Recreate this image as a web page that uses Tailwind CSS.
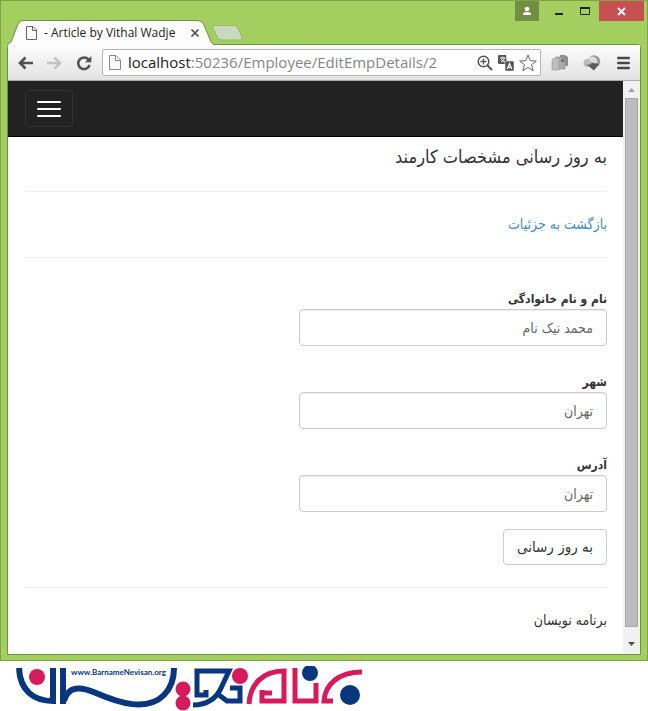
<!DOCTYPE html>
<html lang="fa">
<head>
    <meta charset="UTF-8">
    <meta name="viewport" content="width=device-width, initial-scale=1.0">
    <title>- Article by Vithal Wadje</title>
    <script src="https://cdn.jsdelivr.net/npm/@tailwindcss/browser@4"></script>
</head>
<body class="bg-white font-['Open_Sans','DejaVu_Sans',sans-serif] text-[#333]">
    <!-- Browser window -->
    <div class="border border-[#7fa345] bg-[#a2cf5f] px-[6px] pb-[5px]">
        <!-- Title bar -->
        <div class="flex h-[19px] items-start justify-end">
            <button aria-label="Profile" class="flex h-5 w-6 items-center justify-center bg-[#708f43]">
                <svg class="size-[10px]" viewBox="0 0 10 10" fill="#fff"><circle cx="5" cy="3" r="2.3"/><path d="M1 9V8Q1 6 5 6T9 8V9Z"/></svg>
            </button>
            <button aria-label="Minimize" class="ml-2 flex h-5 w-6 items-center justify-center">
                <svg class="h-3 w-3" viewBox="0 0 12 12"><path d="M2 8h8v2H2z" fill="#1c2610"/></svg>
            </button>
            <button aria-label="Maximize" class="flex h-5 w-7 items-center justify-center">
                <svg class="h-3 w-3" viewBox="0 0 12 12"><path d="M1.500 3h9v6.500h-9z" fill="none" stroke="#1c2610"/><path d="M1 2h10v2H1z" fill="#1c2610"/></svg>
            </button>
            <button aria-label="Close" class="mr-[-3px] flex h-5 w-[45px] items-center justify-center bg-[#c75050]">
                <svg class="size-[9px]" viewBox="0 0 9 9"><path d="M1 1l7 7M8 1l-7 7" stroke="#fff" stroke-width="1.800"/></svg>
            </button>
        </div>

        <!-- Tabs -->
        <div class="flex h-6">
            <div class="relative z-10 -mb-px flex h-[25px] w-[206px] items-center pl-[19px] pr-[14px]">
                <svg class="absolute inset-0 h-full w-full" viewBox="0 0 206 25" preserveAspectRatio="none"><path d="M0 25C4 23 5 21 6 17L11 4Q12.500 .500 16 .500H191Q195 .500 196.500 4L202 17Q204 23 206 24V25Z" fill="#fdfdfd"/><path d="M0 24.500C4 23 5 21 6 17L11 4Q12.500 .500 16 .500H191Q195 .500 196.500 4L202 17Q204 23 206 24" fill="none" stroke="#6f9140"/></svg>
                <svg class="relative h-[14px] w-[11px]" viewBox="0 0 11 14"><path d="M.5.500H7L10.500 4V13.500H.5ZM6.500.500V4.500H10.500" fill="#fff" stroke="#666"/></svg>
                <span class="relative ml-[7px] whitespace-nowrap text-xs text-[#222]">- Article by Vithal Wadje</span>
                <button aria-label="Close tab" class="relative ml-auto">
                    <svg class="size-2" viewBox="0 0 8 8"><path d="M.5.500l7 7M7.500.500l-7 7" stroke="#555" stroke-width="1.600"/></svg>
                </button>
            </div>
            <button aria-label="New tab" class="-ml-px mt-[5px] h-4">
                <svg class="h-4 w-8" viewBox="0 0 32 16"><path d="M2 .500H22Q25 .500 26 3L30 12Q31 15 28 15H9Q6 15 5 12L1 3Q0 .500 2 .500Z" fill="#c8d9bd" stroke="#98b967"/></svg>
            </button>
        </div>

        <!-- Toolbar -->
        <div class="rounded-t-sm border border-[#6f9140]">
            <div class="flex h-9 items-center border-b border-[#aaa] bg-linear-to-b from-[#fdfdfd] to-[#e2e2e2] px-[10px]">
                <button aria-label="Back"><svg class="h-[14px] w-4" viewBox="0 0 16 14"><path d="M15 7H2.500M7.500 1.500L2 7l5.500 5.500" fill="none" stroke="#505050" stroke-width="2.600"/></svg></button>
                <button aria-label="Forward" class="ml-3"><svg class="h-[14px] w-4" viewBox="0 0 16 14"><path d="M1 7H13.500M8.500 1.500L14 7l-5.500 5.500" fill="none" stroke="#c4c4c4" stroke-width="2.600"/></svg></button>
                <button aria-label="Reload" class="ml-[14px]"><svg class="size-4" viewBox="0 0 16 16"><path d="M12.500 4.500A5.800 5.800 0 1 0 13.600 10" fill="none" stroke="#505050" stroke-width="2.500"/><path d="M15.300 1V7.300H9Z" fill="#505050"/></svg></button>
                <div class="ml-[10px] flex h-[27px] min-w-0 grow items-center rounded-xs border border-[#b5b5b5] bg-white pl-[6px] pr-[3px]">
                    <svg class="h-[15px] w-3 shrink-0" viewBox="0 0 12 15"><path d="M.5.500H7L11.500 5V14.500H.5ZM6.500.500V5.500H11.500" fill="#fafafa" stroke="#888"/></svg>
                    <a href="#" dir="ltr" class="ml-[7px] whitespace-nowrap text-[15px] text-[#858585]"><span class="text-[#222]">localhost</span>:50236/Employee/EditEmpDetails/2</a>
                    <button aria-label="Zoom" class="ml-auto"><svg class="size-4" viewBox="0 0 16 16" fill="none" stroke="#555"><circle cx="6.500" cy="6.500" r="5.300" stroke-width="1.500"/><path d="M3.500 6.500h6M6.500 3.500v6" stroke-width="1.300"/><path d="M10.500 10.500l4.500 4.500" stroke-width="2"/></svg></button>
                    <button aria-label="Translate" class="ml-[5px]"><svg class="size-4" viewBox="0 0 16 16"><path d="M1 0H8L9 9H1Q0 9 0 8V1Q0 0 1 0Z" fill="#555"/><path d="M7 6H15Q16 6 16 7V15Q16 16 15 16H8Q7 16 7 15Z" fill="#555" stroke="#fff" stroke-width=".5"/><path d="M2 3h5.500M4.700 1.500V3M3 7Q6 5.500 6.500 3M3 4Q4 6 7 7" stroke="#fff" fill="none"/><path d="M9.300 14l2.200-5.500L13.700 14M10 12.300h3" stroke="#fff" stroke-width="1.200" fill="none"/></svg></button>
                    <button aria-label="Bookmark" class="ml-[5px]"><svg class="h-[18px] w-[18px]" viewBox="0 0 18 18"><path d="M9 1l2.200 5.700 6.100.300-4.800 3.800 1.700 6L9 13.400l-5.200 3.400 1.700-6L.7 7l6.100-.3Z" fill="#fff" stroke="#666"/></svg></button>
                </div>
                <button aria-label="Copy pages" class="ml-[10px]"><svg class="h-[17px] w-[18px]" viewBox="0 0 18 17"><path d="M9 1h5l3 2v9H9Z" fill="#909090"/><path d="M5 3h6l3 2v10H5Z" fill="#aaa" stroke="#888" stroke-width=".6"/><path d="M1 6l2-2h5v12H1Z" fill="#bebebe" stroke="#999" stroke-width=".6"/><path d="M10 5h3v3h-3Z" fill="#777"/></svg></button>
                <button aria-label="Download manager" class="ml-[14px]"><svg class="h-4 w-[18px]" viewBox="0 0 18 16"><circle cx="11" cy="6.500" r="6.200" fill="#999"/><circle cx="4.500" cy="8" r="4" fill="#bbb"/><path d="M6 2Q12 0 14 5T8 7Q5 5 6 2Z" fill="#ddd"/><path d="M3 9Q7 11 9 8l7 1-5 6.500Z" fill="#5c5c5c"/></svg></button>
                <button aria-label="Menu" class="ml-[16px]"><svg class="h-[14px] w-[13px]" viewBox="0 0 13 14"><path d="M1.200 2h10.600M1.200 7h10.600M1.200 12h10.600" stroke="#484848" stroke-width="2.400" stroke-linecap="round"/></svg></button>
            </div>

            <!-- Viewport -->
            <div class="flex bg-white">
                <div class="min-w-0 grow">
                    <nav class="flex h-14 items-center border-b border-black bg-[#222] pl-[17px]">
                        <button aria-label="Toggle navigation" class="flex h-[37px] w-12 flex-col items-center justify-center gap-[5px] rounded-sm border border-[#333]">
                            <span class="h-[2px] w-6 rounded-xs bg-white"></span>
                            <span class="h-[2px] w-6 rounded-xs bg-white"></span>
                            <span class="h-[2px] w-6 rounded-xs bg-white"></span>
                        </button>
                    </nav>

                    <main dir="rtl" class="pb-6 pl-[17px] pr-4 pt-[10px] font-['DejaVu_Sans_Condensed','DejaVu_Sans',sans-serif] text-sm leading-5">
                        <h4 class="text-lg leading-5">به روز رسانی مشخصات کارمند</h4>
                        <hr class="mb-[22px] mt-6 border-[#eee]">
                        <a href="#" class="block text-[#428bca]">بازگشت به جزئیات</a>
                        <hr class="mb-[31px] mt-[23px] border-[#eee]">
                        <form>
                            <div class="mb-[26px]">
                                <label for="name" class="block text-xs leading-5 font-bold">نام و نام خانوادگی</label>
                                <input id="name" type="text" value="محمد نیک نام" class="block h-[37px] w-[308px] max-w-full rounded-sm border border-[#ccc] px-[13px] text-[#666] shadow-[inset_0_1px_1px_rgba(0,0,0,0.075)]">
                            </div>
                            <div class="mb-[26px]">
                                <label for="city" class="block text-xs leading-5 font-bold">شهر</label>
                                <input id="city" type="text" value="تهران" class="block h-[37px] w-[308px] max-w-full rounded-sm border border-[#ccc] px-[13px] text-[#666] shadow-[inset_0_1px_1px_rgba(0,0,0,0.075)]">
                            </div>
                            <div class="mb-[17px]">
                                <label for="address" class="block text-xs leading-5 font-bold">آدرس</label>
                                <input id="address" type="text" value="تهران" class="block h-[37px] w-[308px] max-w-full rounded-sm border border-[#ccc] px-[13px] text-[#666] shadow-[inset_0_1px_1px_rgba(0,0,0,0.075)]">
                            </div>
                            <button type="button" class="block h-9 rounded-sm border border-[#ccc] bg-white px-[13px] text-[15px]">به روز رسانی</button>
                        </form>
                        <hr class="my-[22px] border-[#eee]">
                        <footer>برنامه نویسان</footer>
                    </main>
                </div>

                <!-- Scrollbar -->
                <div class="flex w-[17px] shrink-0 flex-col items-center bg-[#f1f1f1]">
                    <svg class="h-[17px] w-[17px]" viewBox="0 0 17 17"><path d="M5 11h7L8.500 7Z" fill="#a3a3a3"/></svg>
                    <div class="w-[13px] grow border border-[#a8a8a8] bg-[#bcbcbc]"></div>
                    <svg class="mt-[10px] h-[17px] w-[17px]" viewBox="0 0 17 17"><path d="M5 5h7L8.500 9Z" fill="#505050"/></svg>
                </div>
            </div>
        </div>
    </div>

    <!-- Site logo -->
    <div class="px-[14px] pt-[5px]">
        <svg class="h-[45px] w-[348px]" viewBox="14 665 348 45" fill="none" role="img" aria-label="BarnameNevisan">
            <g stroke="#08367f" stroke-width="6">
                <path d="M19 667C20 690 34 700 53 700V667"/>
                <path d="M63 667V703"/>
                <path d="M64 700C68 685 80 685 96 692C119 702 147 711 164 694C171 687 174 679 174 667"/>
            </g>
            <g stroke="#08367f" stroke-width="5">
                <path d="M206 689V694H197V670H229L222 685C217 697 207 704 193 704"/>
                <path d="M219 694L227 700H240V687H230"/>
            </g>
            <g stroke="#d71a5b" stroke-width="5">
                <path d="M249 703C250 684 262 670 284 670V700H262V689"/>
                <path d="M262 692H272"/>
                <path d="M295 667V700H316V682"/>
                <path d="M333 700H324C325 684 338 671 362 671"/>
            </g>
            <g fill="#d71a5b">
                <circle cx="37" cy="676" r="8"/>
                <circle cx="183" cy="688" r="7.500"/>
                <circle cx="183" cy="702" r="7.500"/>
                <circle cx="240" cy="675" r="8"/>
            </g>
            <circle cx="310" cy="672" r="8" fill="#08367f"/>
            <circle cx="350" cy="694" r="10" fill="#08367f"/>
            <text x="71" y="674" font-family="Lato, sans-serif" font-size="8" font-weight="700" fill="#08367f">www.BarnameNevisan.org</text>
        </svg>
    </div>
</body>
</html>
